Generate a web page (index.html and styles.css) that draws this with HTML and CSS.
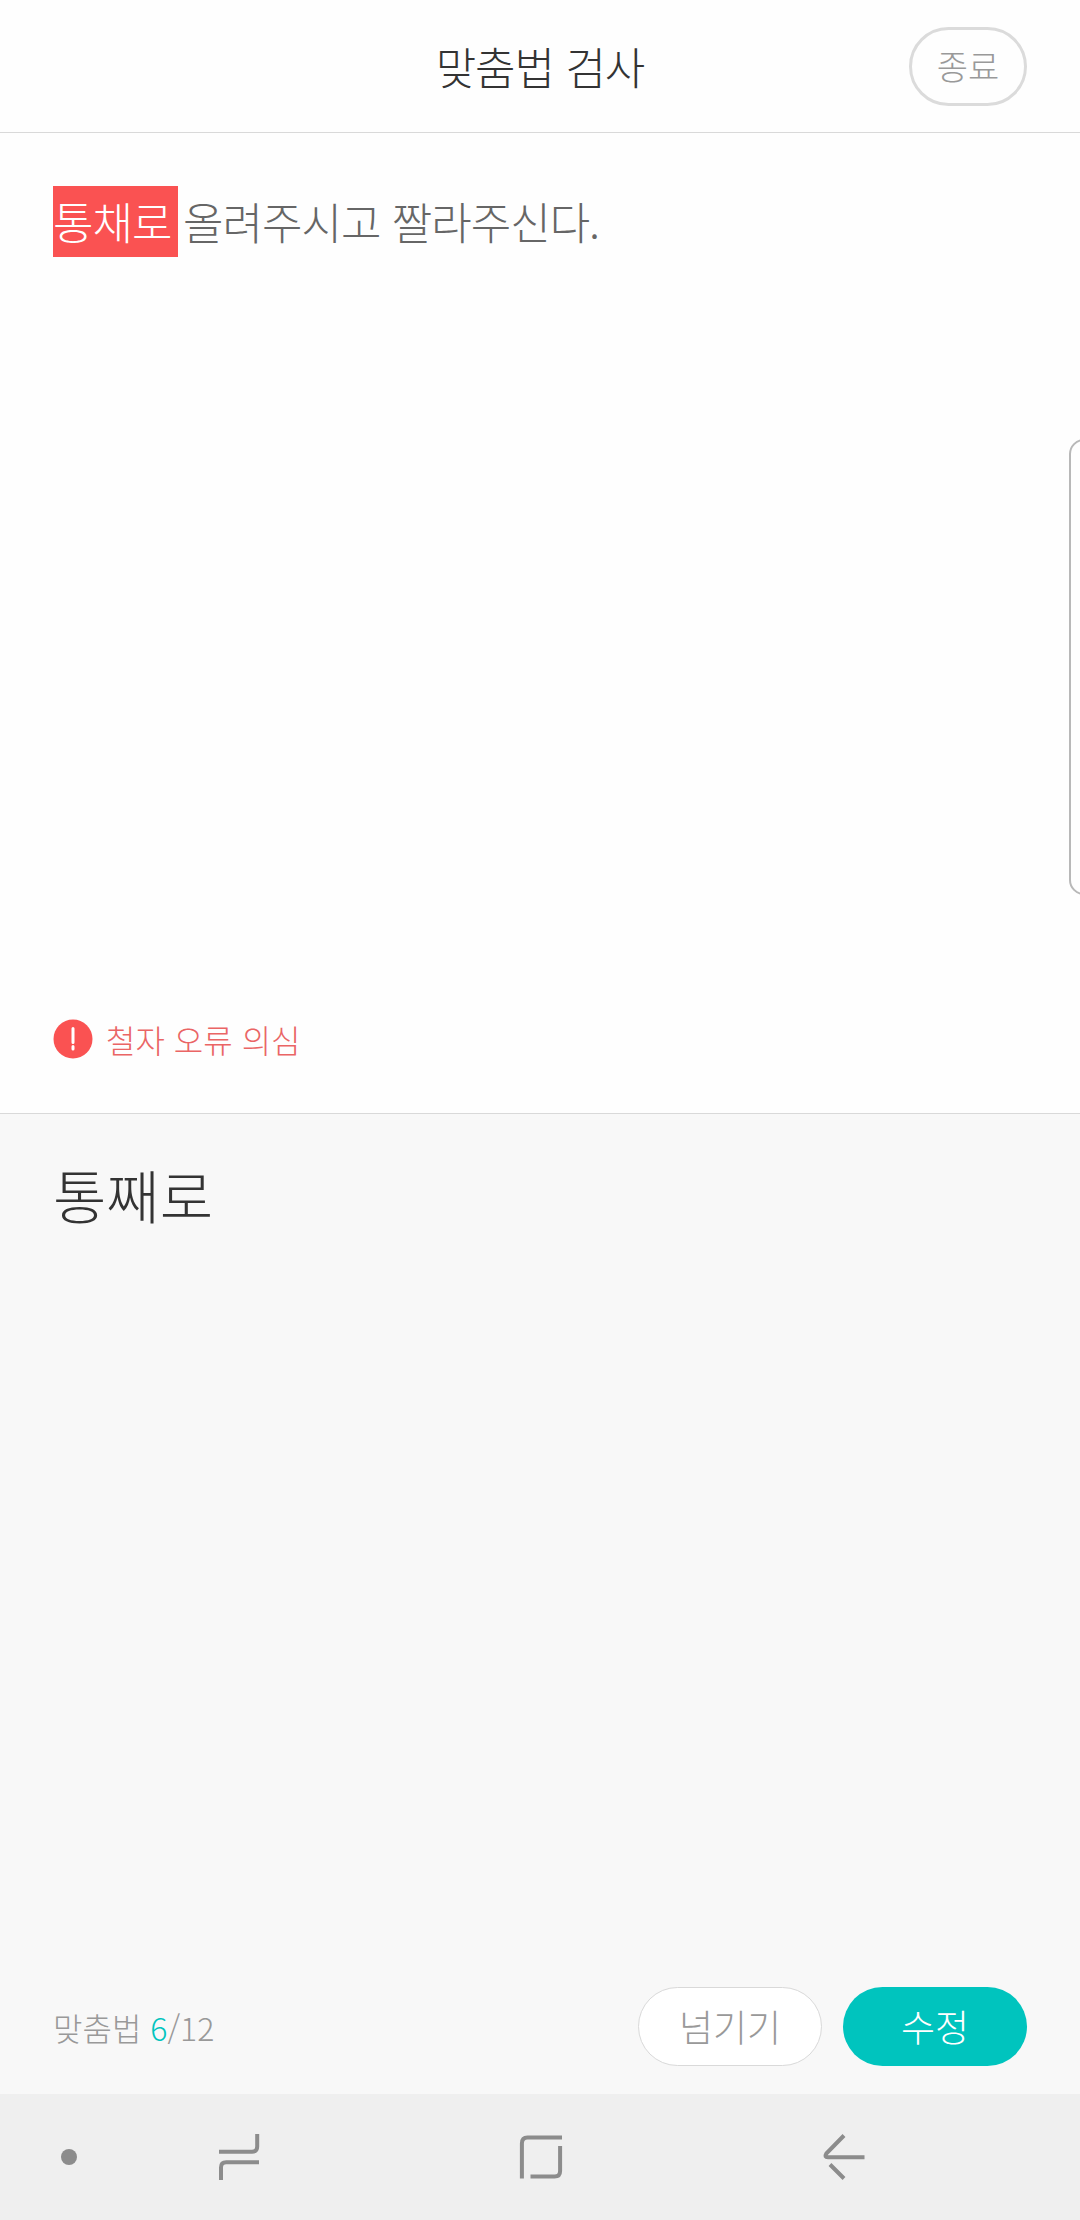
FILE: index.html
```html
<!DOCTYPE html>
<html lang="ko">
<head>
<meta charset="utf-8">
<title>맞춤법 검사</title>
<link rel="stylesheet" href="styles.css">
</head>
<body>
<div class="screen">
  <header class="header">
    <h1 class="title">맞춤법 검사</h1>
    <button class="btn close"><span>종료</span></button>
  </header>
  <main class="source">
    <p class="sentence"><mark class="error">통채로</mark><span class="rest">올려주시고 짤라주신다.</span></p>
    <div class="notice">
      <svg class="alert" viewBox="0 0 40 40"><circle cx="20" cy="20" r="19.5" fill="#fa5252"/><path d="M20 9.5V23.5M20 27.5V30" stroke="#fff" stroke-width="3" stroke-linecap="round"/></svg>
      <span class="notice-text">철자 오류 의심</span>
    </div>
  </main>
  <section class="suggest">
    <p class="word">통째로</p>
    <div class="actions">
      <p class="count">맞춤법 <b>6</b>/12</p>
      <button class="btn skip"><span>넘기기</span></button>
      <button class="btn apply"><span>수정</span></button>
    </div>
  </section>
  <nav class="navbar">
    <svg class="icon" viewBox="0 0 48 48"><circle cx="24" cy="24" r="8" fill="#8c8c8c"/></svg>
    <svg class="icon" viewBox="0 0 48 48"><path d="M4 18.7H37Q42.2 18.7 42.2 13.5V1M44 29.3H11.2Q6 29.3 6 34.5V47"/></svg>
    <svg class="icon" viewBox="0 0 48 48"><path d="M45 4.5H10.500Q4.900 4.500 4.900 10.500V45.500M43.100 13V38Q43.100 43.500 37.600 43.500H13.500"/></svg>
    <svg class="icon" viewBox="0 0 48 48"><path d="M24 2.500L6.300 20.600Q4 24.200 8 24.200H44.500M10 31.500L24 45.500"/></svg>
  </nav>
  <div class="edge"></div>
</div>
</body>
</html>
```
FILE: styles.css
```css
* { box-sizing: border-box; margin: 0; padding: 0; }
body {
  width: 1080px;
  height: 2220px;
  overflow: hidden;
  background: #fefefe;
  font-family: "Noto Sans CJK KR", sans-serif;
  font-weight: 300;
}
.screen { position: relative; display: flex; flex-direction: column; height: 2220px; }
.header {
  display: grid;
  grid-template-columns: 1fr auto 1fr;
  align-items: center;
  height: 133px;
  padding: 0 53px;
  border-bottom: 1px solid #d9d9d9;
}
.title { grid-column: 2; font-size: 44px; font-weight: 300; line-height: 60px; letter-spacing: -1px; color: #333; }
.btn {
  display: flex;
  align-items: center;
  justify-content: center;
  height: 79px;
  border: 0;
  border-radius: 40px;
  font: inherit;
  line-height: 1;
}
.close { justify-self: end; width: 118px; border: 3px solid #dbdbdb; background: #fefefe; font-size: 34px; color: #999; }
.source { display: flex; flex-direction: column; justify-content: space-between; height: 981px; padding: 53px 53px 54px; border-bottom: 1px solid #d9d9d9; }
.sentence { display: flex; font-size: 44px; line-height: 71px; letter-spacing: -1px; color: #666; }
.error { width: 125px; background: #fa5252; color: #fff; }
.rest { margin-left: 5px; white-space: pre; }
.notice { display: flex; align-items: center; gap: 13px; height: 40px; font-size: 32px; color: #ea6565; }
.alert { width: 40px; height: 40px; }
.suggest { flex: 1; display: flex; flex-direction: column; justify-content: space-between; padding: 40px 53px 28px; background: #f8f8f8; }
.word { font-size: 58px; line-height: 80px; color: #333; }
.actions { display: flex; align-items: center; }
.count { flex: 1; font-size: 32px; color: #999; }
.count b { font-weight: 300; color: #00c4be; }
.skip { width: 184px; border: 1px solid #d9d9d9; background: #fff; font-size: 37px; color: #999; }
.apply { width: 184px; margin-left: 21px; background: #00c4be; font-size: 37px; color: #fff; }
.navbar { display: grid; grid-template-columns: 138px 202px 402px 204px; height: 126px; align-items: center; justify-items: center; background: #efefef; }
.icon { width: 48px; height: 48px; fill: none; stroke: #8c8c8c; stroke-width: 4; }
.icon circle { stroke: none; }
.edge { position: absolute; left: 1069px; top: 439px; width: 30px; height: 456px; border: 2px solid #b8b8b8; border-radius: 16px; }
```
